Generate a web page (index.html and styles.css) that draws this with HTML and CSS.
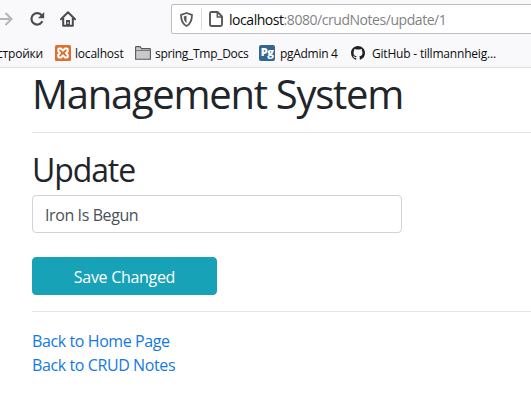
FILE: index.html
```html
<!DOCTYPE html>
<html lang="en">
<head>
<meta charset="utf-8">
<title>Update</title>
<link rel="stylesheet" href="styles.css">
</head>
<body>
<header class="browser">
  <div class="toolbar">
    <svg class="forward" width="13" height="16" viewBox="0 0 13 16"><path d="M0 8h11M5.500 2l6 6-6 6" fill="none" stroke="#b5b5b8" stroke-width="2"/></svg>
    <svg class="reload" width="16" height="16" viewBox="0 0 16 16"><path d="M12.700 4.400A5.700 5.700 0 1 0 12.900 11" fill="none" stroke="#4c4c50" stroke-width="2.200" stroke-linecap="round"/><path d="M15.200 1v6.300H8.900z" fill="#4c4c50"/></svg>
    <svg class="home" width="16" height="16" viewBox="0 0 16 16"><path d="M1 8.200 8 1.300l7 6.900M3.200 7v7.800h9.600V7" fill="none" stroke="#4c4c50" stroke-width="2" stroke-linecap="round" stroke-linejoin="round"/><path d="M6 15V9h4v6" fill="#4c4c50"/><path d="M8 11v2" stroke="#f9f9fa"/></svg>
    <div class="address">
      <svg class="shield" width="13" height="15" viewBox="0 0 13 15"><path d="M6.500 1 12 2.800C12 8.300 10.600 12 6.500 14 2.400 12 1 8.300 1 2.800z" fill="none" stroke="#58585b" stroke-width="1.800" stroke-linejoin="round"/><path d="M6.500 3.600v7.300C4.400 9.500 3.800 7.200 3.700 4.500z" fill="#58585b"/></svg>
      <span class="divider"></span>
      <svg class="document" width="14" height="16" viewBox="0 0 14 16"><path d="M2.500 1h6L13 5.500v8a1.500 1.500 0 0 1-1.500 1.500h-9A1.500 1.500 0 0 1 1 13.500v-11A1.500 1.500 0 0 1 2.500 1z" fill="none" stroke="#58585b" stroke-width="1.900"/><path d="M8.300 1.500v4.500H12.500" fill="none" stroke="#58585b" stroke-width="1.500"/></svg>
      <span class="url"><b>localhost</b>:8080/crudNotes/update/1</span>
    </div>
  </div>
  <nav class="bookmarks">
    <span class="mark first">стройки</span>
    <svg class="icon xampp" width="16" height="16" viewBox="0 0 16 16"><rect width="16" height="16" rx="1.500" fill="#dc7030"/><path d="M4.300 3.500H6L8 5.600l2-2.100h1.700q1 0 1 1v1.700L11 8l1.700 1.800v1.700q0 1-1 1H10L8 10.400l-2 2.100H4.300q-1 0-1-1V9.800L5 8 3.300 6.200V4.500q0-1 1-1z" fill="none" stroke="#fff" stroke-width="2" stroke-linejoin="round"/></svg>
    <span class="mark localhost">localhost</span>
    <svg class="icon folder" width="16" height="14" viewBox="0 0 16 14"><path d="M.6 13.300V1.200Q.6.600 1.200.6H5l1.500 2h8.300q.6 0 .6.600v10.100z" fill="#c9c9cb" stroke="#59595c" stroke-width="1.100"/><path d="M.8 4.500h14.400" stroke="#77777a"/></svg>
    <span class="mark docs">spring_Tmp_Docs</span>
    <span class="icon pg">Pg</span>
    <span class="mark admin">pgAdmin 4</span>
    <svg class="icon github" width="14" height="14" viewBox="0 0 16 16"><path fill="#222" d="M8 0C3.580 0 0 3.580 0 8c0 3.540 2.290 6.530 5.470 7.590.4.070.55-.17.55-.38 0-.19-.01-.82-.01-1.490-2.010.37-2.530-.49-2.690-.94-.09-.23-.48-.94-.82-1.130-.28-.15-.68-.52-.01-.53.63-.01 1.080.58 1.230.82.72 1.210 1.870.87 2.330.66.07-.52.28-.87.51-1.070-1.780-.2-3.640-.89-3.640-3.950 0-.87.31-1.590.82-2.150-.08-.2-.36-1.020.08-2.120 0 0 .67-.21 2.200.82.64-.18 1.320-.27 2-.27s1.360.09 2 .27c1.530-1.040 2.200-.82 2.200-.82.44 1.100.16 1.920.08 2.120.51.56.82 1.270.82 2.150 0 3.070-1.870 3.750-3.650 3.950.29.25.54.73.54 1.480 0 1.070-.01 1.930-.01 2.200 0 .21.15.46.55.38A8.010 8.010 0 0 0 16 8c0-4.420-3.580-8-8-8z"/></svg>
    <span class="mark hub">GitHub - tillmannheig...</span>
  </nav>
</header>
<main class="page">
  <h1>Management System</h1>
  <hr>
  <h2>Update</h2>
  <form>
    <input class="field" type="text" value="Iron Is Begun">
    <button class="save" type="button">Save Changed</button>
  </form>
  <hr>
  <div class="links">
    <a href="#">Back to Home Page</a>
    <a href="#">Back to CRUD Notes</a>
  </div>
</main>
</body>
</html>
```
FILE: styles.css
```css
* { box-sizing: border-box; }
body {
  margin: 0;
  overflow: hidden;
  background: #fff;
  color: #212529;
  font: 16px/24px "Open Sans", "Noto Sans", sans-serif;
}
svg { display: block; flex: none; }
.browser {
  height: 68px;
  background: #f9f9fb;
  border-bottom: 1px solid #dedee0;
}
.toolbar {
  display: flex;
  align-items: center;
  height: 38px;
}
.reload { margin-left: 16px; }
.home { margin-left: 15px; }
.address {
  display: flex;
  align-items: center;
  width: 380px;
  height: 30px;
  margin-left: 95px;
  flex: none;
  padding-left: 8px;
  background: #fff;
  border: 1px solid #bebec0;
  border-radius: 2px;
}
.divider {
  width: 1px;
  height: 22px;
  margin: 0 7px 0 8px;
  background: #dcdcdf;
}
.url {
  margin-left: 6px;
  padding-top: 2px;
  color: #828285;
  font-size: 14px;
  letter-spacing: -0.45px;
  white-space: nowrap;
}
.url b { color: #0c0c0d; font-weight: 400; }
.bookmarks {
  display: flex;
  align-items: center;
  height: 29px;
  padding-top: 1px;
  color: #0c0c0d;
  font-size: 12px;
}
.mark {
  flex: none;
  padding-top: 2px;
  white-space: nowrap;
  letter-spacing: -0.2px;
}
.icon { flex: none; }
.first { width: 58px; margin-left: -3px; }
.localhost { width: 60px; margin-left: 4px; }
.docs { width: 104px; margin-left: 4px; letter-spacing: -0.3px; }
.admin { width: 71px; margin-left: 5px; letter-spacing: -0.3px; }
.hub { margin-left: 7px; }
.pg {
  width: 16px;
  height: 16px;
  border-radius: 2px;
  background: #336791;
  color: #fff;
  font-size: 11px;
  font-weight: 800;
  line-height: 13px;
  letter-spacing: -0.5px;
  text-align: center;
}
.page { padding-left: 32px; }
h1, h2 { font-weight: 400; }
h1 {
  height: 48px;
  margin: 0 0 16px;
  padding-top: 2px;
  font-size: 40px;
  line-height: 48px;
  letter-spacing: -1.27px;
}
h2 {
  height: 38px;
  margin: 0 0 8px;
  padding-top: 2px;
  font-size: 32px;
  line-height: 38px;
  letter-spacing: -1.1px;
}
hr {
  height: 1px;
  margin: 16px 0;
  border: 0;
  background: #e5e5e5;
}
form { display: flex; flex-direction: column; gap: 24px; }
.field, .save {
  height: 38px;
  border-radius: 4px;
  font: inherit;
}
.field {
  width: 370px;
  padding: 7px 12px 5px;
  border: 1px solid #ced4da;
  background: #fff;
  color: #495057;
  letter-spacing: -0.4px;
}
.save {
  width: 185px;
  padding: 7px 6px 5px;
  border: 1px solid #17a2b8;
  background: #17a2b8;
  color: #fff;
  letter-spacing: -0.3px;
}
.links {
  display: flex;
  flex-direction: column;
  align-items: flex-start;
  padding-top: 1px;
  letter-spacing: -0.4px;
}
.links a { color: #1478e3; text-decoration: none; }
```
